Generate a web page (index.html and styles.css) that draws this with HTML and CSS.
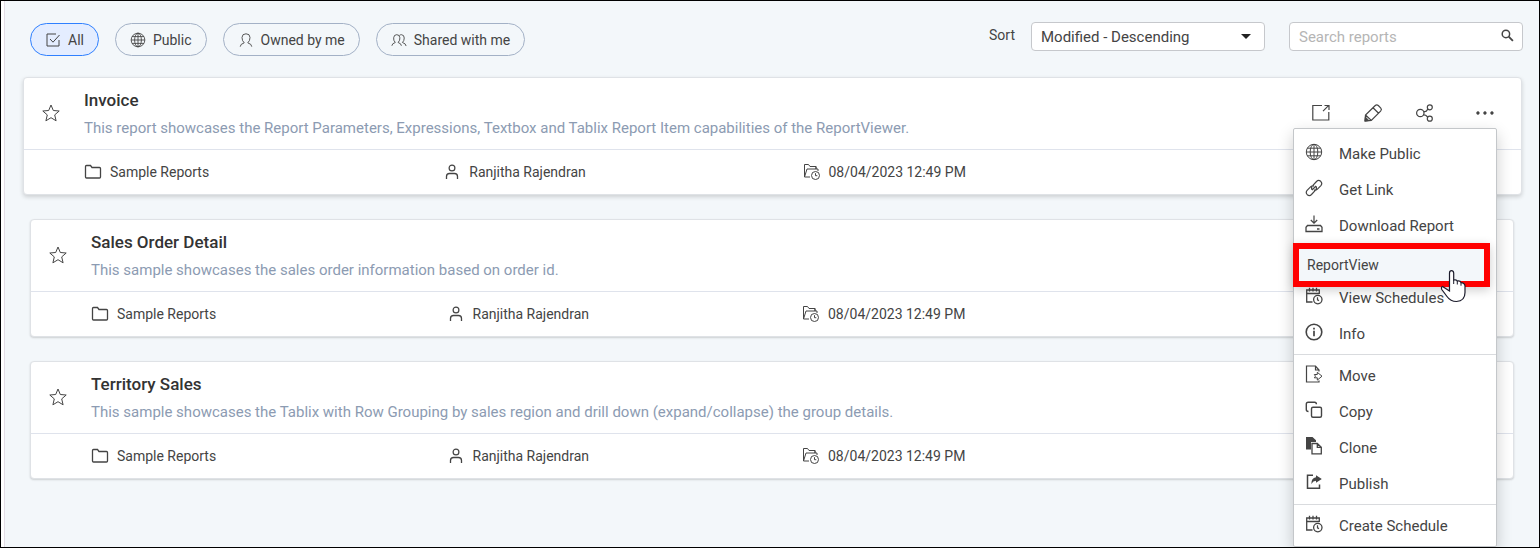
FILE: index.html
```html
<!DOCTYPE html>
<html lang="en">
<head>
<meta charset="utf-8">
<title>Reports</title>
<link rel="stylesheet" href="styles.css">
</head>
<body>
<svg class="sprite" aria-hidden="true">
  <symbol id="star" viewBox="0 0 18 18"><path d="M9 1l2.3 5.5 5.9.5-4.5 3.9 1.4 5.9L9 13.7l-5.1 3.1 1.4-5.9L.8 7l5.9-.5z"/></symbol>
  <symbol id="folder" viewBox="0 0 18 16"><path d="M1.5 13V2.5q0-1 1-1h4l1.500 2h7.500q1 0 1 1V13q0 1-1 1h-13q-1 0-1-1z" stroke-width="1.300"/></symbol>
  <symbol id="user" viewBox="0 0 14 16"><circle cx="7" cy="4" r="2.900" stroke-width="1.200"/><path d="M1.500 15v-2.500q0-3 3-3h5q3 0 3 3V15" stroke-width="1.300"/></symbol>
  <symbol id="folder-clock" viewBox="0 0 18 18"><path d="M7 14H1.500V1.500h4l1.500 2h6v2.500M1.500 14L4 6h11v2M13 6V3.500"/><circle cx="12.500" cy="12.500" r="4"/><path d="M12.500 10.200v2.500h1.800"/></symbol>
  <symbol id="globe" viewBox="0 0 18 18"><circle cx="9" cy="9" r="7.700"/><ellipse cx="9" cy="9" rx="3.800" ry="7.700"/><path d="M9 1.300v15.400M1.300 9h15.400M2.300 5.200h13.400M2.300 12.800h13.400"/></symbol>
  <symbol id="person" viewBox="0 0 16 18"><path d="M1.500 16.500q0-3 4.500-4.300-2.500-2.200-2.500-6Q3.500 2 8 2t4.500 4.200q0 3.800-2.500 6 4.500 1.300 4.500 4.300"/></symbol>
  <symbol id="people" viewBox="0 0 18 18"><path d="M1 15.500q0-2.500 3.800-3.700Q2.500 9.500 3 6.500 3.300 3 6.500 3T10 6.500q.3 3-2 5.300 3.700 1.200 3.700 3.700M9.500 3.800q1-.8 2.200-.8 3.300.3 3.200 3.800 0 3-2 5 3.900 1.200 4.100 4"/></symbol>
  <symbol id="check" viewBox="0 0 16 16"><path d="M11 2H2v12h12V8M5 7l3 3.200L14.500 3"/></symbol>
  <symbol id="open" viewBox="0 0 20 20"><path d="M11 2.500H1.800v14.500h16V9M12 8.200l5.500-5.500M13.500 2.500H18V7" stroke-width="1.200"/></symbol>
  <symbol id="pencil" viewBox="0 0 20 20"><path d="M2 18l.5-6L12 2.700q1.700-1.600 3.300-.2l2.500 2.600q1.300 1.400-.2 3L8.300 17.400zM2.500 12l5.800 5.400M10 4.700l5.600 5.500" stroke-width="1.200"/><path d="M2 18l.4-4 3.400 3.500z" fill="currentColor"/></symbol>
  <symbol id="share" viewBox="0 0 20 20"><circle cx="5.300" cy="10" r="3.700" stroke-width="1.200"/><circle cx="14.800" cy="4.300" r="2.500" stroke-width="1.200"/><circle cx="14.800" cy="15.700" r="2.500" stroke-width="1.200"/><path d="M8.800 8.800l2.500-.6 1.500-2M8.500 11.800l2.200.4 2 1.800" stroke-width="1.200"/></symbol>
  <symbol id="dots" viewBox="0 0 20 20"><path fill="currentColor" stroke="none" d="M3 8.300a1.700 1.700 0 1 1-.1 0zM10 8.300a1.700 1.700 0 1 1-.1 0zM17 8.300a1.700 1.700 0 1 1-.1 0z"/></symbol>
  <symbol id="link" viewBox="0 0 18 18"><path d="M7 10.700Q5.800 8.500 7.700 6.600L11.500 2.500q2-2 4.200-.2 2 2.200.2 4.300l-3.700 3.800q-1.500 1.200-3.200.5M11 7.300q1.200 2.200-.7 4.100l-3.800 4.100q-2 2-4.200.2-2-2.200-.2-4.300L5.800 7.600Q7.300 6.400 9 7.100M7 11l4-4" stroke-width="1.200"/></symbol>
  <symbol id="download" viewBox="0 0 18 18"><path d="M9 .5v7.500M5.800 5L9 8.200 12.200 5" stroke-width="1.200"/><path d="M2.500 10.500h13l1.500 1.800v4.200H1v-4.200zM12 14h2.500" stroke-width="1.300"/></symbol>
  <symbol id="schedule" viewBox="0 0 18 18"><path d="M7.500 15H1.700V3h12.600v4M1.700 6.500h12.600M4.500.8v3.700M11.500.8v3.700M8 .8v3.700" stroke-width="1.300"/><circle cx="12.800" cy="12.600" r="4.200" stroke-width="1.300"/><path d="M12.500 10.300v2.500l1.500.8" stroke-width="1.200"/></symbol>
  <symbol id="info" viewBox="0 0 18 18"><circle cx="9" cy="9" r="7.800" stroke-width="1.600"/><path d="M9 7.800v5.500M9 4.800v1.600" stroke-width="1.700"/></symbol>
  <symbol id="move" viewBox="0 0 18 18"><path d="M14 6.500V5L10.500 1H1.500v16H14v-1.500M10.500 1v4H14" stroke-width="1.200"/><path d="M9.300 9.500h3V7.300L17 11.200l-4.700 3.900v-2.300h-3l1.200-1.600z"/></symbol>
  <symbol id="copy" viewBox="0 0 18 18"><path d="M3.500 10.500q-2.200 0-2.200-2V3q0-1.800 1.800-1.800h6.500q1.800 0 1.800 2" stroke-width="1.400"/><rect x="6.500" y="6.200" width="10" height="10" rx="1.500" stroke-width="1.400"/></symbol>
  <symbol id="clone" viewBox="0 0 18 18"><path fill="currentColor" stroke="none" d="M1 0h6.500l3.500 3.300V5H6v7.500H1z"/><path fill="#fff" d="M7 6.500h5.300l4 3.800v6.500H7zM12.300 6.500v3.800h4" stroke-width="1.300"/></symbol>
  <symbol id="publish" viewBox="0 0 18 18"><path d="M8 2.300H2.500v13h12V11.500" stroke-width="1.500"/><path d="M11 2.300l5.800 3.700-5.800 3.700V7.800q-2.800 0-4.700 3.200Q6.300 5 11 4.300z" fill="currentColor" stroke="none"/></symbol>
  <symbol id="search" viewBox="0 0 14 14"><circle cx="5.300" cy="5.300" r="4" stroke-width="1.600"/><path d="M8.300 8.300l4.500 4.500" stroke-width="2"/></symbol>
</svg>

<main class="page">
  <div class="toolbar">
    <div class="filters">
      <button class="pill pill-active"><svg class="icon icon-sm"><use href="#check"/></svg>All</button>
      <button class="pill"><svg class="icon icon-sm"><use href="#globe"/></svg>Public</button>
      <button class="pill"><svg class="icon icon-sm"><use href="#person"/></svg>Owned by me</button>
      <button class="pill"><svg class="icon icon-sm"><use href="#people"/></svg>Shared with me</button>
    </div>
    <div class="tools">
      <label class="sort-label" for="sort">Sort</label>
      <div class="field">
        <select id="sort" class="control"><option>Modified - Descending</option></select>
        <span class="caret"></span>
      </div>
      <div class="field">
        <input id="search-box" class="control" type="text" placeholder="Search reports" aria-label="Search reports">
        <svg class="icon search-icon"><use href="#search"/></svg>
      </div>
    </div>
  </div>

  <div class="list">
    <article class="card card-open">
      <div class="card-head">
        <button class="icon-button star" aria-label="Favorite"><svg class="icon"><use href="#star"/></svg></button>
        <div class="card-text">
          <h2 class="title">Invoice</h2>
          <p class="description">This report showcases the Report Parameters, Expressions, Textbox and Tablix Report Item capabilities of the ReportViewer.</p>
        </div>
        <div class="actions">
          <button class="icon-button" aria-label="Open"><svg class="icon icon-lg"><use href="#open"/></svg></button>
          <button class="icon-button" aria-label="Edit"><svg class="icon icon-lg"><use href="#pencil"/></svg></button>
          <button class="icon-button" aria-label="Share"><svg class="icon icon-lg"><use href="#share"/></svg></button>
          <div class="more">
            <button class="icon-button" aria-label="More"><svg class="icon icon-lg"><use href="#dots"/></svg></button>
            <div class="menu">
              <button class="item"><svg class="icon"><use href="#globe"/></svg><span class="item-text">Make Public</span></button>
              <button class="item"><svg class="icon"><use href="#link"/></svg><span class="item-text">Get Link</span></button>
              <button class="item"><svg class="icon"><use href="#download"/></svg><span class="item-text">Download Report</span></button>
              <div class="item-slot">
                <button class="item-marked">ReportView</button>
                <svg class="cursor" viewBox="0 0 26 33"><path d="M9.500 21L2.500 16.500Q.8 17 1.800 19.500L7 26.500Q10.500 31.500 16.500 31.500 25 31 25 22.500V16q-.3-3-4-3.300-.5-2.200-3.700-1.700-.6-1.700-3.600-1V3q-.3-2.300-2.200-2.300T9.500 3z" fill="#fff" stroke="#1b1b2b" stroke-width="1.200"/><path d="M9.500 17v4M13.700 10v4M17.300 11v3.500M21 12.700v3" fill="none" stroke="#1b1b2b"/></svg>
              </div>
              <button class="item"><svg class="icon"><use href="#schedule"/></svg><span class="item-text">View Schedules</span></button>
              <button class="item"><svg class="icon"><use href="#info"/></svg><span class="item-text">Info</span></button>
              <hr class="rule">
              <button class="item"><svg class="icon"><use href="#move"/></svg><span class="item-text">Move</span></button>
              <button class="item"><svg class="icon"><use href="#copy"/></svg><span class="item-text">Copy</span></button>
              <button class="item"><svg class="icon"><use href="#clone"/></svg><span class="item-text">Clone</span></button>
              <button class="item"><svg class="icon"><use href="#publish"/></svg><span class="item-text">Publish</span></button>
              <hr class="rule">
              <button class="item"><svg class="icon"><use href="#schedule"/></svg><span class="item-text">Create Schedule</span></button>
            </div>
          </div>
        </div>
      </div>
      <div class="card-foot">
        <span class="meta"><svg class="icon"><use href="#folder"/></svg>Sample Reports</span>
        <span class="meta"><svg class="icon icon-user"><use href="#user"/></svg>Ranjitha Rajendran</span>
        <span class="meta"><svg class="icon"><use href="#folder-clock"/></svg>08/04/2023 12:49 PM</span>
      </div>
    </article>

    <article class="card">
      <div class="card-head">
        <button class="icon-button star" aria-label="Favorite"><svg class="icon"><use href="#star"/></svg></button>
        <div class="card-text">
          <h2 class="title">Sales Order Detail</h2>
          <p class="description">This sample showcases the sales order information based on order id.</p>
        </div>
      </div>
      <div class="card-foot">
        <span class="meta"><svg class="icon"><use href="#folder"/></svg>Sample Reports</span>
        <span class="meta"><svg class="icon icon-user"><use href="#user"/></svg>Ranjitha Rajendran</span>
        <span class="meta"><svg class="icon"><use href="#folder-clock"/></svg>08/04/2023 12:49 PM</span>
      </div>
    </article>

    <article class="card">
      <div class="card-head">
        <button class="icon-button star" aria-label="Favorite"><svg class="icon"><use href="#star"/></svg></button>
        <div class="card-text">
          <h2 class="title">Territory Sales</h2>
          <p class="description">This sample showcases the Tablix with Row Grouping by sales region and drill down (expand/collapse) the group details.</p>
        </div>
      </div>
      <div class="card-foot">
        <span class="meta"><svg class="icon"><use href="#folder"/></svg>Sample Reports</span>
        <span class="meta"><svg class="icon icon-user"><use href="#user"/></svg>Ranjitha Rajendran</span>
        <span class="meta"><svg class="icon"><use href="#folder-clock"/></svg>08/04/2023 12:49 PM</span>
      </div>
    </article>
  </div>
</main>
</body>
</html>
```

FILE: styles.css
```css
* { box-sizing: border-box; }

body {
  margin: 0;
  min-height: 100vh;
  display: flex;
  padding-left: 3px;
  border: 1px solid #000;
  background: #fff;
  color: #444;
  font: 14px/20px Roboto, "Liberation Sans", sans-serif;
}

button, input, select { font: inherit; color: inherit; }
button { padding: 0; border: 0; background: none; cursor: pointer; }

.sprite { position: absolute; width: 0; height: 0; }

.icon {
  flex: none;
  width: 18px;
  height: 18px;
  fill: none;
  stroke: currentColor;
  stroke-width: 1px;
}
.icon-sm { width: 16px; height: 16px; }
.icon-lg { width: 20px; height: 20px; }
.icon-user { width: 18px; height: 16px; }

.page {
  flex: 1;
  min-width: 0;
  padding: 21px 25px 0;
  border-left: 1px solid #e3dde6;
  background: #f3f7fa;
}

.toolbar {
  display: flex;
  justify-content: space-between;
  align-items: flex-start;
  margin-right: -9px;
}
.filters { display: flex; gap: 16px; padding-top: 1px; }
.pill {
  display: flex;
  align-items: center;
  gap: 7px;
  height: 33px;
  padding: 0 14px;
  border: 1px solid #a3b1c6;
  border-radius: 17px;
}
.pill-active { border-color: #2f80ff; background: #e4edff; }

.tools { display: flex; gap: 24px; }
.sort-label { margin-right: -8px; padding-top: 3px; }
.field { position: relative; width: 234px; }
.control {
  display: block;
  width: 100%;
  height: 29px;
  padding: 0 9px;
  border: 1px solid #c6c8cc;
  border-radius: 4px;
  background: #fff;
  font-size: 15px;
  appearance: none;
}
.control::placeholder { color: #b5b5b5; opacity: 1; }
.caret {
  position: absolute;
  top: 12px;
  right: 14px;
  border: 5px solid transparent;
  border-top-color: #222;
  border-bottom: 0;
  pointer-events: none;
}
.search-icon {
  position: absolute;
  top: 7px;
  right: 9px;
  width: 13px;
  height: 13px;
}

.list { display: grid; gap: 24px; margin-top: 21px; }
.card {
  border: 1px solid #dfe2e6;
  border-radius: 4px;
  background: #fff;
  box-shadow: 0 1px 2px rgba(0, 0, 0, .16);
}
.card-open {
  position: relative;
  z-index: 1;
  margin: 0 -8px 0 -7px;
  box-shadow: 0 2px 4px rgba(0, 0, 0, .16);
}
.card-head {
  display: flex;
  align-items: center;
  height: 72px;
  padding-right: 26px;
  border-bottom: 1px solid #dfe3ec;
}
.icon-button { display: block; flex: none; height: 20px; }
.star { width: 60px; padding-right: 6px; }
.card-text { flex: 1; min-width: 0; }
.title {
  margin: 0 0 7px;
  color: #333;
  font-size: 17px;
  font-weight: 500;
  line-height: 22px;
}
.description {
  margin: 0;
  color: #8c9bb2;
  font-size: 15px;
  line-height: 20px;
}

.card-foot {
  display: grid;
  grid-template-columns: 25% 25% 1fr;
  align-items: center;
  height: 44px;
  padding-left: 60px;
}
.meta { display: flex; align-items: center; gap: 8px; }

.actions { display: flex; gap: 32px; padding-bottom: 2px; }
.more { position: relative; margin-left: 8px; }
.menu {
  position: absolute;
  top: calc(100% + 5px);
  right: -2px;
  width: 204px;
  padding: 7px 0 2px;
  border: 1px solid #c4c7ca;
  border-radius: 2px;
  background: #fff;
  box-shadow: 0 6px 16px rgba(0, 0, 0, .2);
}
.item {
  display: flex;
  align-items: center;
  gap: 16px;
  width: 100%;
  height: 36px;
  padding: 0 11px 4px;
  font-size: 15px;
  text-align: left;
}
.item-text { padding-top: 4px; }
.rule { height: 1px; margin: 2px 0 3px; border: 0; background: #d9dbde; }

.item-slot { position: relative; height: 36px; }
.item-marked {
  position: absolute;
  top: -1px;
  left: -1px;
  width: 197px;
  height: 44px;
  padding: 0 8px;
  border: 6px solid #f00;
  background: #f3f7fa;
  box-shadow: 0 3px 10px rgba(0, 0, 0, .2);
  text-align: left;
}
.cursor {
  position: absolute;
  top: 26px;
  left: 146px;
  width: 26px;
  height: 33px;
}
```
